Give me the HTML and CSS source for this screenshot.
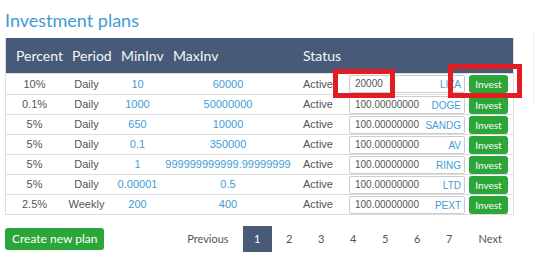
FILE: index.html
```html
<!DOCTYPE html>
<html lang="en">
<head>
<meta charset="utf-8">
<title>Investment plans</title>
<link rel="stylesheet" href="styles.css">
</head>
<body>
<div class="page">
  <main class="panel">
    <h2 class="title">Investment plans</h2>
    <div class="table-wrap">
      <table class="plans">
        <colgroup>
          <col class="w-percent"><col class="w-period"><col class="w-min"><col class="w-max"><col>
        </colgroup>
        <thead>
          <tr>
            <th class="h-percent">Percent</th>
            <th class="h-period">Period</th>
            <th class="h-min">MinInv</th>
            <th class="h-max">MaxInv</th>
            <th class="h-status">Status</th>
          </tr>
        </thead>
        <tbody>
          <tr class="first">
            <td>10%</td><td>Daily</td><td class="link">10</td><td class="link">60000</td>
            <td class="status-cell"><div class="status"><span class="state">Active</span><label class="amount"><input class="amount-input" value="20000"><span class="cur">LIZA</span></label><button class="invest">Invest</button></div></td>
          </tr>
          <tr>
            <td>0.1%</td><td>Daily</td><td class="link">1000</td><td class="link">50000000</td>
            <td class="status-cell"><div class="status"><span class="state">Active</span><label class="amount"><input class="amount-input" value="100.00000000"><span class="cur">DOGE</span></label><button class="invest">Invest</button></div></td>
          </tr>
          <tr>
            <td>5%</td><td>Daily</td><td class="link">650</td><td class="link">10000</td>
            <td class="status-cell"><div class="status"><span class="state">Active</span><label class="amount"><input class="amount-input" value="100.00000000"><span class="cur">SANDG</span></label><button class="invest">Invest</button></div></td>
          </tr>
          <tr>
            <td>5%</td><td>Daily</td><td class="link">0.1</td><td class="link">350000</td>
            <td class="status-cell"><div class="status"><span class="state">Active</span><label class="amount"><input class="amount-input" value="100.00000000"><span class="cur">AV</span></label><button class="invest">Invest</button></div></td>
          </tr>
          <tr>
            <td>5%</td><td>Daily</td><td class="link">1</td><td class="link">999999999999.99999999</td>
            <td class="status-cell"><div class="status"><span class="state">Active</span><label class="amount"><input class="amount-input" value="100.00000000"><span class="cur">RING</span></label><button class="invest">Invest</button></div></td>
          </tr>
          <tr>
            <td>5%</td><td>Daily</td><td class="link">0.00001</td><td class="link">0.5</td>
            <td class="status-cell"><div class="status"><span class="state">Active</span><label class="amount"><input class="amount-input" value="100.00000000"><span class="cur">LTD</span></label><button class="invest">Invest</button></div></td>
          </tr>
          <tr>
            <td>2.5%</td><td>Weekly</td><td class="link">200</td><td class="link">400</td>
            <td class="status-cell"><div class="status"><span class="state">Active</span><label class="amount"><input class="amount-input" value="100.00000000"><span class="cur">PEXT</span></label><button class="invest">Invest</button></div></td>
          </tr>
        </tbody>
      </table>
    </div>
    <div class="footer">
      <button class="btn-create">Create new plan</button>
      <ul class="pager">
        <li><a class="pg pg-text">Previous</a></li>
        <li><a class="pg pg-num active">1</a></li>
        <li><a class="pg pg-num">2</a></li>
        <li><a class="pg pg-num">3</a></li>
        <li><a class="pg pg-num">4</a></li>
        <li><a class="pg pg-num">5</a></li>
        <li><a class="pg pg-num">6</a></li>
        <li><a class="pg pg-num">7</a></li>
        <li><a class="pg pg-text pg-next">Next</a></li>
      </ul>
    </div>
  </main>
  <aside class="side"></aside>
  <div class="mark mark-input"></div>
  <div class="mark mark-button"></div>
</div>
</body>
</html>
```
FILE: styles.css
```css
html, body {
  margin: 0;
  padding: 0;
  background: #fff;
}

.page {
  position: relative;
  display: flex;
  align-items: flex-start;
  width: 535px;
  height: 269px;
  overflow: hidden;
}

.panel {
  width: 528px;
  flex: none;
  box-sizing: border-box;
  padding: 9px 0 0 5px;
}

.side {
  flex: none;
  margin-left: 5px;
  margin-top: 33px;
  height: 70px;
  border-left: 1px solid #ebebeb;
}

.title {
  margin: 0 0 7px;
  font: 400 18px/22px Lato, "Liberation Sans", sans-serif;
  color: #3d9cd5;
}

.table-wrap {
  width: 509px;
  box-sizing: border-box;
  border: 1px solid #dddddd;
  border-top: 0;
}

.plans {
  width: 100%;
  table-layout: fixed;
  border-collapse: separate;
  border-spacing: 0;
}

.w-percent { width: 57px; }
.w-period { width: 47px; }
.w-min { width: 55px; }
.w-max { width: 126px; }

.plans th {
  height: 35px;
  padding: 0 0 0 10px;
  background: #475a77;
  color: #f4f6f9;
  font: 400 14px/35px Lato, "Liberation Sans", sans-serif;
  text-align: left;
  white-space: nowrap;
}

.plans th.h-period { padding-left: 9px; }
.plans th.h-min { padding-left: 11px; }
.plans th.h-max { padding-left: 8px; }
.plans th.h-status { padding-left: 12px; }

.plans td {
  height: 19px;
  padding: 0;
  border-top: 1px solid #dddddd;
  font: 11px/19px "Liberation Sans", Arial, sans-serif;
  color: #555;
  text-align: center;
  white-space: nowrap;
}

.plans tr.first td {
  height: 20px;
}

.plans td.link {
  color: #3f9dd5;
}

.plans td.status-cell {
  text-align: left;
  padding-left: 12px;
}

.status {
  display: flex;
  align-items: center;
}

.state {
  width: 46px;
  flex: none;
}

.amount {
  width: 116px;
  height: 18px;
  flex: none;
  box-sizing: border-box;
  border: 1px solid #cccccc;
  border-radius: 2px;
  display: flex;
  align-items: center;
  padding: 0 3px 0 5px;
  background: #fff;
}

.amount-input {
  flex: 1;
  min-width: 0;
  border: 0;
  padding: 0;
  margin: 0;
  outline: none;
  background: transparent;
  font: 10px/16px "Liberation Sans", Arial, sans-serif;
  color: #555;
}

.cur {
  flex: none;
  font: 10px/16px "Liberation Sans", Arial, sans-serif;
  color: #3f9dd5;
  padding-top: 2px;
}

.invest {
  flex: none;
  margin-left: 4px;
  width: 39px;
  height: 18px;
  padding: 0;
  border: 0;
  border-radius: 3px;
  background: #2ba638;
  color: #fff;
  font: 400 10px/18px Lato, "Liberation Sans", sans-serif;
}

.footer {
  width: 509px;
  margin-top: 11px;
  display: flex;
  align-items: center;
  justify-content: space-between;
}

.btn-create {
  height: 22px;
  padding: 0 7px;
  border: 0;
  border-radius: 3px;
  background: #2ba638;
  color: #fff;
  font: 400 12px/22px Lato, "Liberation Sans", sans-serif;
}

.pager {
  display: flex;
  gap: 3px;
  list-style: none;
  margin: 0;
  padding: 0;
}

.pg {
  display: block;
  height: 26px;
  font: 400 11px/26px Lato, "Liberation Sans", sans-serif;
  color: #555;
  text-align: center;
}

.pg-num {
  width: 29px;
}

.pg-text {
  padding: 0 11px;
}

.pg-next {
  padding: 0 12px;
}

.pg.active {
  background: #475a77;
  color: #fff;
}

.mark {
  position: absolute;
  box-sizing: border-box;
  border: 5px solid #e31b23;
}

.mark-input {
  left: 333px;
  top: 69px;
  width: 62px;
  height: 29px;
}

.mark-button {
  left: 448px;
  top: 64px;
  width: 74px;
  height: 34px;
}
```
